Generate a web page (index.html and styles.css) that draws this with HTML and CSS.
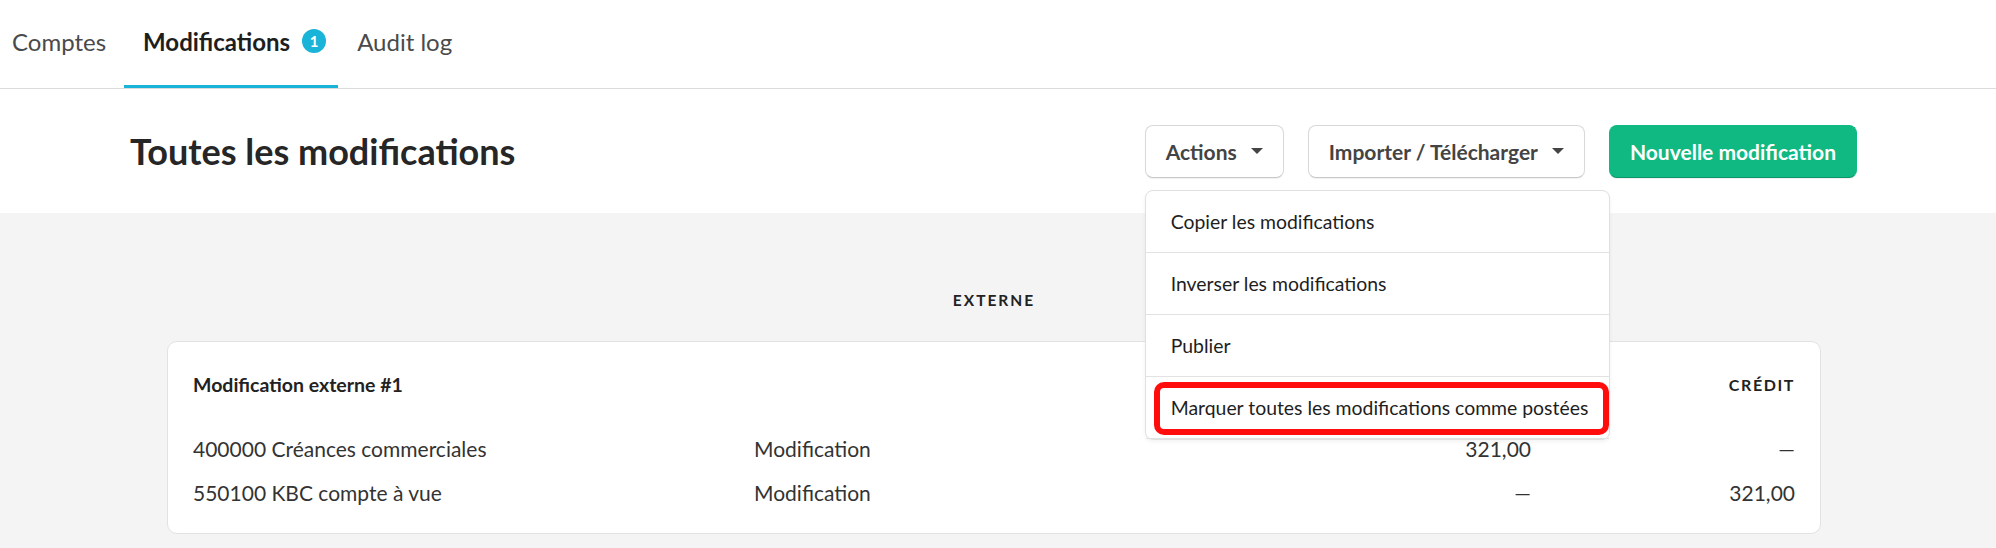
FILE: index.html
```html
<!DOCTYPE html>
<html lang="fr">
<head>
<meta charset="utf-8">
<title>Toutes les modifications</title>
<link rel="stylesheet" href="styles.css">
</head>
<body>
<nav class="tabs">
  <a class="tab">Comptes</a>
  <a class="tab active">Modifications <span class="badge">1</span></a>
  <a class="tab">Audit log</a>
</nav>
<header class="page-head">
  <h1 class="title">Toutes les modifications</h1>
  <div class="actions">
    <div class="dd">
      <button class="btn">Actions <span class="caret"></span></button>
      <div class="menu">
        <div class="menu-item">Copier les modifications</div>
        <div class="menu-item">Inverser les modifications</div>
        <div class="menu-item">Publier</div>
        <div class="menu-item">Marquer toutes les modifications comme postées</div>
        <div class="highlight"></div>
      </div>
    </div>
    <button class="btn">Importer / Télécharger <span class="caret"></span></button>
    <button class="btn primary">Nouvelle modification</button>
  </div>
</header>
<main class="content">
  <div class="section-label">EXTERNE</div>
  <section class="card">
    <div class="row head">
      <div class="c-name">Modification externe #1</div>
      <div></div>
      <div class="num col-h">DÉBIT</div>
      <div class="num col-h">CRÉDIT</div>
    </div>
    <div class="row line">
      <div>400000 Créances commerciales</div>
      <div>Modification</div>
      <div class="num">321,00</div>
      <div class="num">—</div>
    </div>
    <div class="row line">
      <div>550100 KBC compte à vue</div>
      <div>Modification</div>
      <div class="num">—</div>
      <div class="num">321,00</div>
    </div>
  </section>
</main>
</body>
</html>
```
FILE: styles.css
```css
* { box-sizing: border-box; }
html, body { margin: 0; padding: 0; }
body {
  font-family: Lato, "Noto Sans", sans-serif;
  color: #222;
  background: #f4f4f4;
  width: 1996px;
  height: 548px;
  overflow: hidden;
}
.tabs {
  display: flex;
  height: 89px;
  background: #fff;
  border-bottom: 1px solid #dcdcdc;
}
.tab {
  display: flex;
  align-items: center;
  padding: 0 19px 3px;
  font-size: 24px;
  color: #4a4a4a;
  border-bottom: 3px solid transparent;
  height: 88px;
}
.tab:first-child { padding-left: 12px; padding-right: 18px; }
.tab.active {
  color: #1e1e1e;
  font-weight: 700;
  border-bottom-color: #19b4d8;
  padding-right: 12px;
}
.badge {
  display: inline-flex;
  align-items: center;
  justify-content: center;
  width: 24px;
  height: 24px;
  margin-left: 12px;
  border-radius: 50%;
  background: #19b4d8;
  color: #fff;
  font-size: 15px;
  font-weight: 700;
}
.page-head {
  display: flex;
  align-items: center;
  justify-content: space-between;
  height: 124px;
  padding: 0 139px 0 130px;
  background: #fff;
}
.title {
  margin: 0;
  font-size: 36px;
  font-weight: 700;
  color: #262626;
}
.actions {
  display: flex;
  gap: 24px;
  align-items: center;
}
.dd { position: relative; }
.btn {
  display: inline-flex;
  align-items: center;
  gap: 14px;
  height: 53px;
  padding: 0 20px;
  border: 1px solid #d9d9d9;
  border-bottom-color: #c8c8c8;
  border-radius: 8px;
  background: #fff;
  font-family: inherit;
  font-size: 21px;
  font-weight: 700;
  color: #444;
  box-shadow: 0 1px 1px rgba(0,0,0,0.06);
}
.caret {
  width: 0;
  height: 0;
  border-left: 6px solid transparent;
  border-right: 6px solid transparent;
  border-top: 6px solid #444;
}
.btn.primary {
  background: #10b981;
  border-color: #10b981;
  border-bottom-color: #0b9468;
  color: #fff;
}
.menu {
  position: absolute;
  left: 0;
  top: 65px;
  width: 465px;
  background: #fff;
  border: 1px solid #e0e0e0;
  border-radius: 8px;
  box-shadow: 0 2px 4px rgba(0,0,0,0.05);
  z-index: 5;
}
.menu-item {
  height: 62px;
  display: flex;
  align-items: center;
  padding: 0 25px;
  font-size: 19.4px;
  white-space: nowrap;
  color: #1e1e1e;
  border-bottom: 1px solid #e2e2e2;
}
.menu-item:last-of-type { border-bottom: 0; height: 60px; }
.highlight {
  position: absolute;
  left: 8px;
  top: 191px;
  width: 455px;
  height: 53px;
  border: 6px solid #ff0d0d;
  border-radius: 10px;
}
.content {
  padding: 0 175px 0 167px;
}
.section-label {
  height: 128px;
  display: flex;
  align-items: center;
  justify-content: center;
  padding-top: 46px;
  font-size: 15.5px;
  font-weight: 700;
  letter-spacing: 2px;
  color: #222;
}
.card {
  background: #fff;
  border: 1px solid #e2e2e2;
  border-radius: 10px;
  padding: 20px 25px 24px;
  height: 193px;
}
.row {
  display: grid;
  grid-template-columns: 561px 577px 200px 264px;
  align-items: center;
}
.row.head {
  height: 44px;
  margin-bottom: 20px;
  font-size: 19.5px;
  font-weight: 700;
}
.col-h {
  font-size: 16px;
  letter-spacing: 1.6px;
}
.row.line {
  height: 44px;
  font-size: 21px;
  color: #333;
}
.num { text-align: right; }
```
